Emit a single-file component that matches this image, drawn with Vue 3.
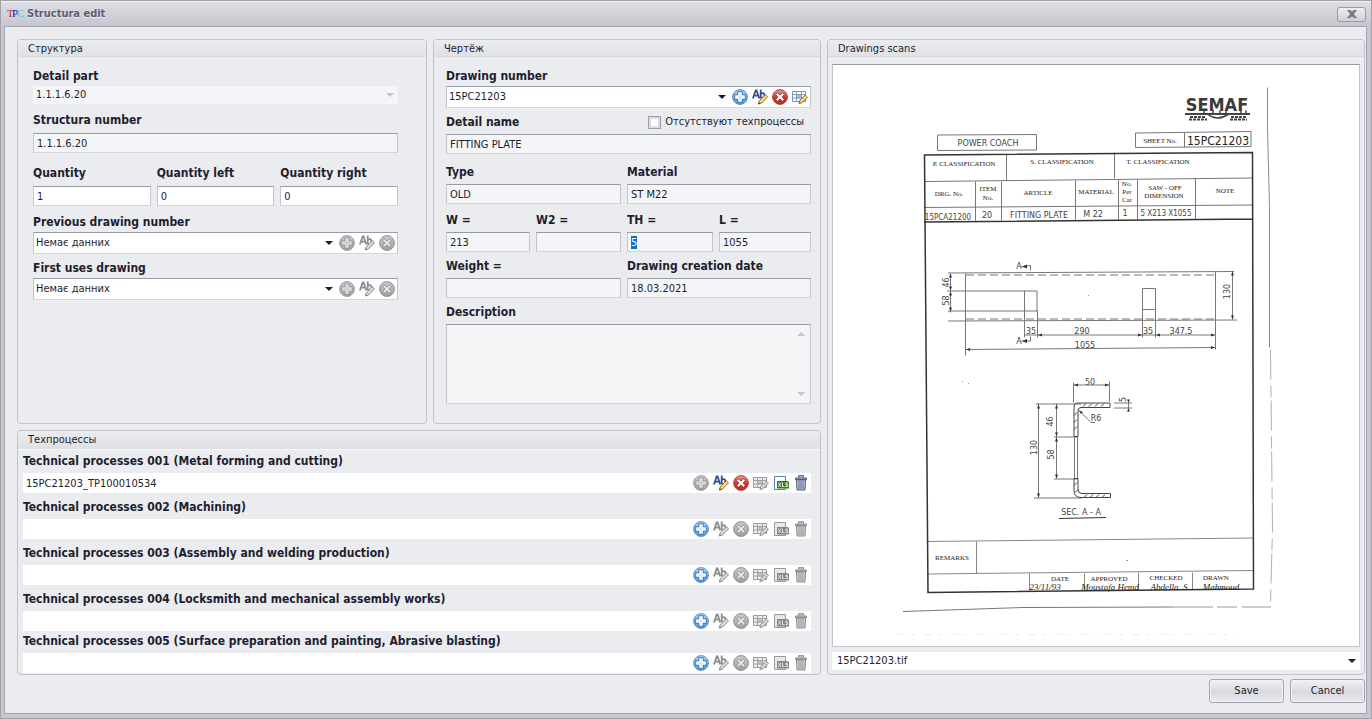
<script setup>
import { ref, onMounted } from 'vue'

const processes = [
  { id: 'tp1', label: 'Technical processes 001 (Metal forming and cutting)', value: '15PC21203_TP100010534' },
  { id: 'tp2', label: 'Technical processes 002 (Machining)', value: '' },
  { id: 'tp3', label: 'Technical processes 003 (Assembly and welding production)', value: '' },
  { id: 'tp4', label: 'Technical processes 004 (Locksmith and mechanical assembly works)', value: '' },
  { id: 'tp5', label: 'Technical processes 005 (Surface preparation and painting, Abrasive blasting)', value: '' }
]
const tools = [
  { icon: 'add', title: 'Add', filled: false },
  { icon: 'edit', title: 'Edit', filled: true },
  { icon: 'remove', title: 'Remove', filled: true },
  { icon: 'grid', title: 'Edit table', filled: false },
  { icon: 'xls', title: 'Export', filled: true },
  { icon: 'trash', title: 'Delete', filled: true }
]
const isOff = (tool, process) => (tool.icon === 'add' ? !!process.value : !process.value || !tool.filled)

const thickness = ref(null)
onMounted(() => {
  thickness.value.focus()
  thickness.value.select()
})
</script>

<template>
  <main class="window">
    <svg class="sprite" width="0" height="0" aria-hidden="true">
      <defs>
        <linearGradient id="gBlue" x1="0" y1="0" x2="0" y2="1"><stop offset="0" stop-color="#b4d8f4" /><stop offset="1" stop-color="#5097d8" /></linearGradient>
        <linearGradient id="gRed" x1="0" y1="0" x2="0" y2="1"><stop offset="0" stop-color="#e8a09a" /><stop offset=".5" stop-color="#cf3a32" /><stop offset="1" stop-color="#bb2a25" /></linearGradient>
        <linearGradient id="gGray" x1="0" y1="0" x2="0" y2="1"><stop offset="0" stop-color="#cccccc" /><stop offset="1" stop-color="#a0a0a0" /></linearGradient>
      </defs>
      <symbol id="add" viewBox="0 0 16 16">
        <circle cx="8" cy="8" r="7.4" fill="url(#gBlue)" stroke="#5b8cc4" />
        <path d="M7 4h2v3h3v2h-3v3h-2v-3h-3v-2h3z" fill="none" stroke="#3a78bb" stroke-width="3.400" />
        <path d="M7 4h2v3h3v2h-3v3h-2v-3h-3v-2h3z" fill="#8cc2ec" stroke="#fff" stroke-width="1.600" />
      </symbol>
      <symbol id="add-off" viewBox="0 0 16 16">
        <circle cx="8" cy="8" r="7.4" fill="url(#gGray)" stroke="#9c9c9c" />
        <path d="M7 4h2v3h3v2h-3v3h-2v-3h-3v-2h3z" fill="none" stroke="#929292" stroke-width="3.200" />
        <path d="M7 4h2v3h3v2h-3v3h-2v-3h-3v-2h3z" fill="#b4b4b4" stroke="#dedede" stroke-width="1.600" />
      </symbol>
      <symbol id="remove" viewBox="0 0 16 16">
        <circle cx="8" cy="8" r="7.4" fill="url(#gRed)" stroke="#b04744" />
        <path d="M5.4 3.800L8 6l2.600-2.200 1.700 1.700L10.200 8l2.100 2.500-1.700 1.700L8 10l-2.600 2.200-1.700-1.700L5.800 8 3.700 5.500z" fill="#fff" stroke="#9c2320" stroke-width=".8" />
      </symbol>
      <symbol id="remove-off" viewBox="0 0 16 16">
        <circle cx="8" cy="8" r="7.4" fill="url(#gGray)" stroke="#8f8f8f" />
        <path d="M5.400 3.800L8 6l2.600-2.200 1.700 1.700L10.200 8l2.100 2.500-1.700 1.700L8 10l-2.600 2.200-1.700-1.700L5.800 8 3.700 5.500z" fill="#e2e2e2" stroke="#858585" stroke-width=".8" />
      </symbol>
      <symbol id="edit" viewBox="0 0 16 16">
        <path d="M.9 9.500L3.700 1.400h.9l2.600 8.100M2 6.700h4.200M8.700.600v8.700M8.900 5c1-1.500 3.500-1.200 3.500 1.300 0 2.800-2.500 3.400-3.500 2.200" fill="none" stroke="#34528f" stroke-width="1.800" />
        <path d="M6.400 15l.8-3.200 6-6.200 2.400 2.200-6 6.200z" fill="#f3c766" stroke="#8a6230" stroke-width=".9" />
        <path d="M8.700 13l5.500-5.700" stroke="#fff0b5" />
        <path d="M6.300 15.200l.5-1.900 1.400 1.400z" fill="#3c3020" />
      </symbol>
      <symbol id="edit-off" viewBox="0 0 16 16">
        <path d="M.9 9.500L3.700 1.400h.9l2.600 8.100M2 6.700h4.200M8.700.600v8.700M8.900 5c1-1.500 3.500-1.200 3.500 1.300 0 2.800-2.500 3.400-3.500 2.200" fill="none" stroke="#8c8c8c" stroke-width="1.800" />
        <path d="M6.400 15l.8-3.200 6-6.200 2.400 2.200-6 6.200z" fill="#d6d6d6" stroke="#8a8a8a" stroke-width=".9" />
        <path d="M6.300 15.200l.5-1.900 1.400 1.400z" fill="#777" />
      </symbol>
      <symbol id="grid" viewBox="0 0 16 16">
        <path d="M.5 2.500h13v10H.5z" fill="#fff" stroke="#7d91b5" />
        <path d="M4.500 5.500h5v4h-5z" fill="#8cc4f2" />
        <path d="M.5 5.500h13M.5 9h13M4.500 2.500v10M9.500 2.500v10" fill="none" stroke="#8b9dbd" />
        <path d="M6.900 14.600l.9-3.200 5.400-5.400 2.300 2.200-5.500 5.500z" fill="#f3c766" stroke="#8a6230" stroke-width=".9" />
        <path d="M9.200 12.600l5-5" stroke="#fff0b5" />
      </symbol>
      <symbol id="grid-off" viewBox="0 0 16 16">
        <path d="M.5 2.500h13v10H.5z" fill="#eee" stroke="#9b9b9b" />
        <path d="M4.500 5.500h5v4h-5z" fill="#c4c4c4" />
        <path d="M.5 5.500h13M.5 9h13M4.500 2.500v10M9.500 2.500v10" fill="none" stroke="#a2a2a2" />
        <path d="M6.900 14.600l.9-3.200 5.400-5.400 2.300 2.200-5.500 5.500z" fill="#d3d3d3" stroke="#8a8a8a" stroke-width=".9" />
      </symbol>
      <symbol id="xls" viewBox="0 0 16 16">
        <path d="M1.500 1.500h11v13h-11z" fill="#fbfdff" stroke="#4f81b5" />
        <path d="M4 6h10.500L16 7v6.500H4z" fill="#2f7d1d" />
        <path d="M5.200 7.600l2.800 4.300M8 7.600l-2.800 4.300M9.500 7.500v4h2M14.900 8h-2v1.700h1.700v1.800h-2.100" fill="none" stroke="#fff" stroke-width=".9" />
      </symbol>
      <symbol id="xls-off" viewBox="0 0 16 16">
        <path d="M1.500 1.500h11v13h-11z" fill="#e8e8e8" stroke="#999" />
        <path d="M4 6h10.500L16 7v6.500H4z" fill="#858585" />
        <path d="M5.200 7.600l2.800 4.300M8 7.600l-2.800 4.300M9.500 7.500v4h2M14.900 8h-2v1.700h1.700v1.800h-2.100" fill="none" stroke="#eee" stroke-width=".9" />
      </symbol>
      <symbol id="trash" viewBox="0 0 16 16">
        <path d="M5.500 2.500V.7h5v1.800M2.500 4.500v-1.500h11v1.500z" fill="#aebad0" stroke="#4a5a7c" />
        <path d="M3.500 5h9l-.5 10h-8z" fill="#c6d0e2" stroke="#4a5a7c" />
        <path d="M6 6v8M8 6v8M10 6v8" stroke="#55668a" />
      </symbol>
      <symbol id="trash-off" viewBox="0 0 16 16">
        <path d="M5.500 2.500V.7h5v1.800M2.500 4.500v-1.500h11v1.500z" fill="#c0c0c0" stroke="#8a8a8a" />
        <path d="M3.500 5h9l-.5 10h-8z" fill="#d0d0d0" stroke="#8a8a8a" />
        <path d="M6 6v8M8 6v8M10 6v8" stroke="#999" />
      </symbol>
    </svg>

    <header class="titlebar">
      <span class="logo" aria-hidden="true"><i class="t">T</i><i class="p">P</i><i class="c">C</i></span>
      <h1>Structura edit</h1>
      <button type="button" class="close" aria-label="Close">
        <svg viewBox="0 0 10 8" width="10" height="8"><path d="M0 0h3.500L5 2 6.500 0H10L6.800 4 10 8H6.500L5 6 3.500 8H0l3.200-4z" fill="#74798a" /></svg>
      </button>
    </header>

    <form class="content" @submit.prevent>
      <div class="panels">
        <section class="panel structure">
          <h2>Структура</h2>
          <div class="panel-body">
            <div class="field">
              <label for="detailPart">Detail part</label>
              <div class="combo flat off">
                <select id="detailPart" disabled><option>1.1.1.6.20</option></select>
              </div>
            </div>
            <div class="field g8 spaced">
              <label for="structNumber">Structura number</label>
              <input id="structNumber" class="box off" value="1.1.1.6.20" readonly>
            </div>
            <div class="row thirds g12">
              <div class="field spaced"><label for="q">Quantity</label><input id="q" class="box" value="1"></div>
              <div class="field spaced"><label for="ql">Quantity left</label><input id="ql" class="box" value="0"></div>
              <div class="field spaced"><label for="qr">Quantity right</label><input id="qr" class="box" value="0"></div>
            </div>
            <div v-for="(name, i) in ['Previous drawing number', 'First uses drawing']" :key="name" class="field" :class="i ? 'g6' : 'g8'">
              <label :for="'ref' + i">{{ name }}</label>
              <div class="combo box tall">
                <select :id="'ref' + i"><option>Немає данних</option></select>
                <div class="tools">
                  <button v-for="icon in ['add', 'edit', 'remove']" :key="icon" type="button" disabled :aria-label="icon">
                    <svg width="16" height="16"><use :href="'#' + icon + '-off'" /></svg>
                  </button>
                </div>
              </div>
            </div>
          </div>
        </section>

        <section class="panel drawing">
          <h2>Чертёж</h2>
          <div class="panel-body">
            <div class="field">
              <label for="drawingNumber">Drawing number</label>
              <div class="combo box tall">
                <select id="drawingNumber"><option>15PC21203</option></select>
                <div class="tools">
                  <button v-for="icon in ['add', 'edit', 'remove', 'grid']" :key="icon" type="button" :aria-label="icon">
                    <svg width="16" height="16"><use :href="'#' + icon" /></svg>
                  </button>
                </div>
              </div>
            </div>
            <div class="field g6">
              <div class="label-row">
                <label for="detailName">Detail name</label>
                <label class="check"><input type="checkbox"> Отсутствуют техпроцессы</label>
              </div>
              <input id="detailName" class="box off" value="FITTING PLATE" readonly>
            </div>
            <div class="row halves g10">
              <div class="field"><label for="type">Type</label><input id="type" class="box off" value="OLD" readonly></div>
              <div class="field"><label for="material">Material</label><input id="material" class="box off" value="ST M22" readonly></div>
            </div>
            <div class="row quarters g8">
              <div class="field"><label for="w">W =</label><input id="w" class="box off" value="213" readonly></div>
              <div class="field"><label for="w2">W2 =</label><input id="w2" class="box off" value="" readonly></div>
              <div class="field"><label for="th">TH =</label><input id="th" ref="thickness" class="box off" value="5" readonly></div>
              <div class="field"><label for="l">L =</label><input id="l" class="box off" value="1055" readonly></div>
            </div>
            <div class="row halves g6">
              <div class="field"><label for="weight">Weight =</label><input id="weight" class="box off" value="" readonly></div>
              <div class="field"><label for="date">Drawing creation date</label><input id="date" class="box off" value="18.03.2021" readonly></div>
            </div>
            <div class="field g6">
              <label for="description">Description</label>
              <div class="memo box off">
                <textarea id="description" readonly></textarea>
                <span class="scroll" aria-hidden="true"><i class="up"></i><i class="down"></i></span>
              </div>
            </div>
          </div>
        </section>

        <section class="panel processes">
          <h2>Техпроцессы</h2>
          <div class="panel-body">
            <div v-for="p in processes" :key="p.id" class="field">
              <label :for="p.id">{{ p.label }}</label>
              <div class="combo plain">
                <input :id="p.id" :value="p.value">
                <div class="tools">
                  <button v-for="t in tools" :key="t.icon" type="button" :aria-label="t.title" :disabled="isOff(t, p)">
                    <svg width="16" height="16"><use :href="'#' + t.icon + (isOff(t, p) ? '-off' : '')" /></svg>
                  </button>
                </div>
              </div>
            </div>
          </div>
        </section>

        <section class="panel scans">
          <h2>Drawings scans</h2>
          <div class="panel-body">
            <div class="sheet">
              <svg viewBox="833 66 526 580" role="img" aria-label="Fitting plate drawing sheet">
                <!-- paper edges -->
                <g fill="none" stroke="#8a8a8a">
                  <path d="M1267.500 88v40l2 80v140" />
                  <path d="M1270.500 350l2 180-2 72" stroke="#b0b0b0" stroke-dasharray="30 6 12 3" />
                  <path d="M903 612l120-4 150-.5" stroke="#777" />
                  <path d="M1173 607.500h98" stroke="#999" stroke-dasharray="40 4 20 5" />
                  <path d="M898 635h340" stroke="#eee" stroke-dasharray="8 6 3 9" />
                </g>
                <!-- maker's mark -->
                <text x="1217" y="111" class="brand">SEMAF</text>
                <g fill="none" stroke="#444">
                  <path d="M1185 114.500h65" stroke-width="2" />
                  <path d="M1190 117.500h15M1189 120h18M1231 117.500h16M1230 120h17" stroke-width="2" stroke-dasharray="3 1" />
                  <path d="M1208 115q9 7 20 0M1204 111v3M1213 110v4M1220 111v4M1226 109v5M1241 110v4M1246 111v3" stroke-width="1.500" />
                </g>
                <!-- title blocks -->
                <g fill="none" stroke="#777">
                  <path d="M937.500 135.500l99-.5v15.500l-99 .5zM1135.500 133.500l115.500-1.500v15l-115.500 1zM1184.500 133v15" />
                  <path d="M1006.500 155v26M1114.500 153v26M924 182l328-3.500M924 208l328-2.500M975.500 182v39M1001.500 182v39M1075.500 181v39M1118.500 180v40M1137.500 180v40M1195.500 179v41" />
                  <path d="M927 542l326-3.500M976.500 542v32M927 574.500l326-3.500M1029.500 574v17M1084.500 574v17M1138.500 573v18M1192.500 573v17" stroke="#888" />
                </g>
                <path d="M924.500 155.500L1252.500 153l1 436.500L928 593zM924 222.500l328-3" fill="none" stroke="#333" stroke-width="1.500" />
                <g class="type">
                  <text x="964" y="166">P. CLASSIFICATION</text>
                  <text x="1062" y="164">S. CLASSIFICATION</text>
                  <text x="1158" y="164">T. CLASSIFICATION</text>
                  <text x="949" y="196">DRG. No.</text>
                  <text x="988" y="191">ITEM</text><text x="988" y="200">No.</text>
                  <text x="1038" y="195">ARTICLE</text>
                  <text x="1096" y="194">MATERIAL</text>
                  <text x="1127" y="186">No.</text><text x="1127" y="194">Per</text><text x="1127" y="202">Car</text>
                  <text x="1165" y="190">SAW - OFF</text><text x="1164" y="198">DIMENSION</text>
                  <text x="1225" y="193">NOTE</text>
                  <text x="1160" y="143">SHEET No.</text>
                  <text x="952" y="560">REMARKS</text>
                  <text x="1060" y="581">DATE</text>
                  <text x="1109" y="581">APPROVED</text>
                  <text x="1166" y="580">CHECKED</text>
                  <text x="1216" y="580">DRAWN</text>
                </g>
                <g class="hand">
                  <text x="988" y="146">POWER COACH</text>
                  <text x="948" y="220" class="narrow">15PCA21200</text>
                  <text x="987" y="218">20</text>
                  <text x="1039" y="218">FITTING PLATE</text>
                  <text x="1093" y="217">M 22</text>
                  <text x="1125" y="216">1</text>
                  <text x="1166" y="216" class="narrow">5 X213 X1055</text>
                  <text x="1218" y="145" class="big">15PC21203</text>
                  <text x="1019" y="269">A</text>
                  <text x="1019" y="344">A</text>
                  <text x="1031" y="334">35</text>
                  <text x="1082" y="334">290</text>
                  <text x="1148" y="334">35</text>
                  <text x="1181" y="334">347.5</text>
                  <text x="1085" y="348">1055</text>
                  <text x="1090" y="385">50</text>
                  <text x="1096" y="421">R6</text>
                  <text x="1081" y="515">SEC. A - A</text>
                  <text transform="translate(949 283) rotate(-90)">46</text>
                  <text transform="translate(949 301) rotate(-90)">58</text>
                  <text transform="translate(1230 292) rotate(-90)">130</text>
                  <text transform="translate(1126 400) rotate(-90)">5</text>
                  <text transform="translate(1053 422) rotate(-90)">46</text>
                  <text transform="translate(1054 455) rotate(-90)">58</text>
                  <text transform="translate(1037 448) rotate(-90)">130</text>
                </g>
                <g class="signed">
                  <text x="1045" y="590">23/11/93</text>
                  <text x="1110" y="590">Moustafa Hemd</text>
                  <text x="1169" y="590">Abdella. S</text>
                  <text x="1221" y="590">Mahmoud</text>
                </g>
                <!-- plate, plan view -->
                <g fill="none" stroke="#777">
                  <path d="M948 273.500l286-1.500M948 321.500l289-1M965.500 274v82M1215.500 272v78M947 291.500h90v20h-89M1024.500 291v47M1037.500 311v27M1142.500 338v-49h13v21h-13M1155.500 310v28M950.500 274v39M1232.500 272v48M1037 335.500h105M1156 335.500h59M1024 335.500h13M1142 335.500h13M966 350l249-2" />
                  <path d="M966 275.500h249M966 319.500h249" stroke-dasharray="8 4" />
                  <path d="M1030.500 271v-5l-10 1.500M1030.500 337v4.500h-9" />
                </g>
                <path d="M950.500 274l-1.500 4h3zM950.500 291l-1.500-4h3zM950.500 292l-1.500 4h3zM950.500 312l-1.500-4h3zM1232.500 272l-1.500 4h3zM1232.500 320l-1.500-4h3zM1038 335.500l4-1.500v3zM1142 335.500l-4-1.500v3zM1156 335.500l4-1.500v3zM1215 335.500l-4-1.500v3zM966 350l4-1.500v3zM1215 348l-4-1.500v3zM1022 267l5-2v4zM1022 341.500l5-2v4z" fill="#333" />
                <!-- channel section -->
                <g fill="none" stroke="#777">
                  <path d="M1073.500 403v-20M1109.500 402v-20M1074 385.500h36M1036 404.500h45M1038.500 404v94M1034 498.500h48M1056.500 404v75M1054 437.500h24M1054 479.500h24M1128.500 402v10M1114 403.500h18M1114 408.500h18M1078 410l13 13h4M1074.500 437v42M1077.500 437v42" />
                  <path d="M1110 403.500h-33q-3 0-3 4v29.500h4v-26q0-3 3-3h29zM1074 479v12q0 7 7 7h29.500v-4H1082q-4 0-4-4v-11z" stroke="#444" />
                  <path d="M1083 407l3-3M1089 407l3-3M1095 407l3-3M1101 407l3-3M1074 416l3-3M1074 423l3-3M1074 430l3-3M1074 486l3-3M1075 493l3-3M1084 498l3-3M1090 498l3-3M1096 498l3-3M1102 498l3-3" stroke="#444" />
                  <path d="M1059 519l47-1" stroke="#333" />
                </g>
                <path d="M1074 385.500l4-1.500v3zM1109 385.500l-4-1.500v3zM1038.500 405l-1.500 4h3zM1038.500 498l-1.500-4h3zM1056.500 405l-1.500 4h3zM1056.500 437l-1.500-4h3zM1056.500 438l-1.500 4h3zM1056.500 479l-1.500-4h3zM1128.500 403l-1.500-3h3zM1128.500 409l-1.500 3h3zM1079 411l4 1.500-2 2z" fill="#333" />
                <path d="M962 382h1M968 384h1M1126 561h2M1088 296h1" stroke="#999" />
              </svg>
            </div>
            <div class="combo plain file">
              <select aria-label="Scan file"><option>15PC21203.tif</option></select>
            </div>
          </div>
        </section>
      </div>

      <footer class="actions">
        <button type="submit">Save</button>
        <button type="button">Cancel</button>
      </footer>
    </form>
  </main>
</template>

<style>
body { margin: 0; }
</style>

<style scoped>
* { box-sizing: border-box; }
.window {
  min-height: 100vh;
  display: flex;
  flex-direction: column;
  padding: 0 4px 4px 3px;
  border: 1px solid #a0a0ab;
  background: #c7c7d0;
  color: #1e1e30;
  font: 11px/14px "DejaVu Sans Condensed", "Noto Sans", sans-serif;
}
.sprite { position: absolute; }
button, input, select, textarea { font: inherit; color: inherit; margin: 0; }
.titlebar {
  display: flex;
  align-items: center;
  height: 25px;
  margin: 0 -4px 0 -3px;
  padding: 0 5px;
  border-top: 1px solid #f2f2f5;
  background: linear-gradient(#dddde2, #c6c6cf);
}
.titlebar h1 { margin: 0 auto 0 4px; font-size: 11px; line-height: 16px; font-weight: bold; color: #5d5d70; text-shadow: 0 1px 0 #ececf2; }
.logo { display: flex; width: 17px; height: 14px; padding-left: 1px; font: 11px/12px "Liberation Serif", serif; }
.logo i { font-style: normal; width: 5px; }
.t { color: #d02828; } .p { color: #1414b4; } .c { color: #3fd0ea; }
.close {
  display: grid;
  place-items: center;
  width: 29px;
  height: 15px;
  padding: 0;
  border: 1px solid #9c9ca8;
  border-radius: 3px;
  background: linear-gradient(#eeeef1, #cfcfd6);
}
.content { flex: 1; display: flex; flex-direction: column; padding: 12px 1px 10px 12px; border: 1px solid #a5a5b0; background: #ebecef; }
.panels { flex: 1; display: grid; grid-template-columns: 410fr 388fr 538fr; grid-template-rows: 1fr 245px; gap: 6px; }
.panel { display: flex; flex-direction: column; min-width: 0; border: 1px solid #c0c1c9; border-radius: 4px; }
.panel h2 { margin: 0; height: 19px; padding-left: 10px; font-size: 11px; line-height: 18px; font-weight: normal; background: linear-gradient(#ebecef, #dfe0e4); border-bottom: 1px solid #f7f7f9; border-radius: 3px 3px 0 0; }
.processes { grid-column: 1 / 3; grid-row: 2; }
.scans { grid-column: 3; grid-row: 1 / 3; }
.panel-body { flex: 1; display: flex; flex-direction: column; min-height: 0; }
.structure .panel-body { padding: 9px 28px 0 15px; }
.drawing .panel-body { padding: 9px 9px 19px 12px; }
.processes .panel-body { padding: 3px 9px 1px 5px; gap: 6px; }
.processes .field { gap: 4px; }
.processes .field:last-child { margin-top: -4px; }
.scans .panel-body { padding: 5px 4px 4px; gap: 5px; }
.field { display: flex; flex-direction: column; gap: 2px; min-width: 0; }
.spaced { gap: 5px; }
.drawing .field { gap: 4px; }
.drawing .panel-body > .field:first-child { gap: 2px; }
label { font-size: 12px; line-height: 16px; font-weight: bold; white-space: nowrap; }
.g6 { margin-top: 6px; }
.g8 { margin-top: 8px; }
.g10 { margin-top: 10px; }
.g12 { margin-top: 12px; }
.row { display: grid; column-gap: 6px; }
.thirds { grid-template-columns: 1fr 1fr 1fr; }
.halves { grid-template-columns: 175fr 184fr; }
.quarters { grid-template-columns: 84fr 85fr 86fr 92fr; }
.box { width: 100%; border: 1px solid #c3c4cc; border-top-color: #989aa5; border-bottom-color: #d4d5da; background: #fff; }
input.box { height: 20px; padding: 0 3px; }
.off { background: #f4f5f7; }
input:focus, textarea:focus, select:focus { outline: none; }
input::selection { background: #0f6fc5; color: #fff; }
.combo { display: flex; align-items: center; position: relative; background: #fff; }
.combo select, .combo > input { flex: 1; min-width: 0; height: 100%; padding: 0 3px; border: 0; background: none; appearance: none; opacity: 1; }
.combo.flat { height: 18px; }
.combo.flat, .combo.off { background: #f4f5f7; }
.combo.tall { height: 22px; }
.combo.tall select { padding-left: 2px; padding-right: 16px; }
.combo.plain { height: 20px; }
.combo.plain.file { height: 18px; }
.combo.file select { padding-left: 5px; }
.combo:has(select)::after {
  content: "";
  position: absolute;
  right: 4px;
  border: solid transparent;
  border-width: 4px 4px 0;
  border-top-color: #1c1c2c;
  pointer-events: none;
}
.combo.off::after { border-top-color: #c6c6cc; }
.structure .combo.tall::after { right: 64px; }
.drawing .combo.tall::after { right: 84px; }
.tools { display: flex; gap: 4px; padding-right: 2px; }
.tools button { width: 16px; height: 16px; padding: 0; border: 0; background: none; }
.tools svg { display: block; }
.label-row { display: flex; justify-content: space-between; }
.label-row .check { display: flex; align-items: center; gap: 4px; padding-right: 7px; font-size: 11px; font-weight: normal; }
.check input { appearance: none; width: 13px; height: 13px; border: 1px solid #9b9dab; background: #fff; box-shadow: inset 0 0 0 2px #dcdde2; }
.drawing .panel-body > .field:last-child { flex: 1; }
.memo { flex: 1; display: flex; }
.memo textarea { flex: 1; min-width: 0; height: 100%; padding: 3px; border: 0; resize: none; background: none; }
.scroll { display: flex; flex-direction: column; justify-content: space-between; padding: 7px 5px; }
.up, .down { border: 4px solid transparent; }
.up { border-top: 0; border-bottom-color: #c6c7cc; }
.down { border-bottom: 0; border-top-color: #c6c7cc; }
.sheet { flex: 1; min-height: 0; border: 1px solid #c3c4cc; border-top-color: #989aa5; background: #fff; display: flex; }
.sheet svg { flex: 1; min-width: 0; width: 100%; height: 100%; }
.sheet text { text-anchor: middle; }
.brand { font: bold 18px "DejaVu Sans Condensed", sans-serif; fill: #3a3a3a; }
.type { font: 7px "Liberation Serif", serif; fill: #222; }
.hand { font: 8px "DejaVu Sans", sans-serif; fill: #444; }
.narrow { font-family: "DejaVu Sans Condensed", sans-serif; }
.big { font: 12px "DejaVu Sans Condensed", sans-serif; fill: #222; }
.signed { font: italic 9px "Liberation Serif", serif; fill: #222; }
.actions { display: flex; justify-content: flex-end; gap: 6px; margin-top: 4px; }
.actions button { width: 75px; height: 24px; padding: 0; border: 1px solid #a3a4af; border-radius: 3px; background: linear-gradient(#f0f1f4, #d9dae0 55%, #e9eaee); box-shadow: inset 0 0 0 1px #f3f3f6; }
</style>
